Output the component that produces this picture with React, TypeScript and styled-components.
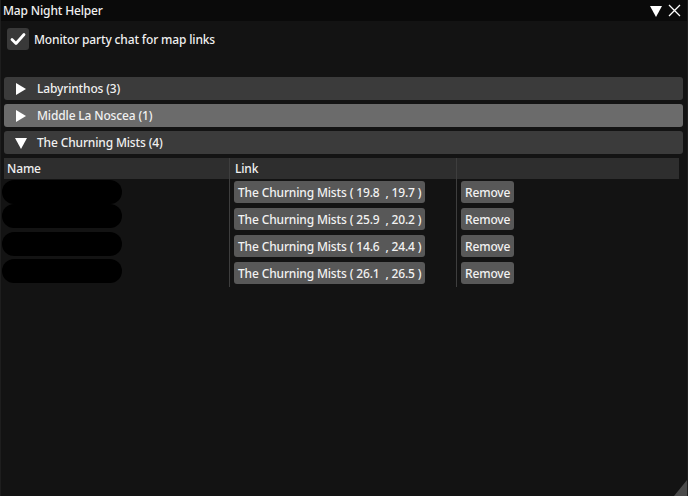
import React from "react";
import styled, { createGlobalStyle } from "styled-components";

const GlobalStyle = createGlobalStyle`
  html, body { margin: 0; padding: 0; background: #131313; }
  * { box-sizing: border-box; }
`;

const Window = styled.div`
  width: 688px;
  height: 496px;
  background: #131313;
  border-left: 1px solid #1e1e1e;
  border-right: 1px solid #1e1e1e;
  display: flex;
  flex-direction: column;
  position: relative;
  font-family: "Noto Sans", "Open Sans", sans-serif;
  font-weight: 500;
  font-size: 12px;
  letter-spacing: -0.15px;
  color: #f0f0f0;
  overflow: hidden;
`;

const TitleBar = styled.div`
  height: 21px;
  background: #0a0a0a;
  display: flex;
  align-items: center;
  padding: 0 6px 0 2px;
  gap: 6px;
`;

const Title = styled.span`
  flex: 1;
  line-height: 21px;
`;

const Body = styled.div`
  display: flex;
  flex-direction: column;
  padding: 7px 4px 0 3px;
`;

const CheckRow = styled.label`
  display: flex;
  align-items: center;
  gap: 5px;
  height: 22px;
  padding-left: 3px;
  margin-bottom: 27px;
`;

const CheckBox = styled.span`
  width: 22px;
  height: 22px;
  border-radius: 3px;
  background: #393939;
  display: flex;
  align-items: center;
  justify-content: center;
`;

const Headers = styled.div`
  display: flex;
  flex-direction: column;
  gap: 4px;
`;

const Header = styled.div<{ $hover?: boolean }>`
  height: 23px;
  border-radius: 3px;
  background: ${(p) => (p.$hover ? "#6b6b6b" : "#3b3b3b")};
  display: flex;
  align-items: center;
  padding-left: 11px;
  gap: 10px;
`;

const Table = styled.div`
  margin-top: 4px;
  width: 675px;
  display: grid;
  grid-template-columns: 225px 227px 1fr;
  grid-auto-rows: 27px;
  grid-template-rows: 21px;
`;

const HeadCell = styled.div<{ $first?: boolean }>`
  background: #2e2e2e;
  line-height: 21px;
  padding-left: ${(p) => (p.$first ? "3px" : "5px")};
  border-left: ${(p) => (p.$first ? "none" : "1px solid #3e3e3e")};
`;

const Cell = styled.div<{ $first?: boolean }>`
  padding-top: 2px;
  padding-left: ${(p) => (p.$first ? "0" : "4px")};
  border-left: ${(p) => (p.$first ? "none" : "1px solid #3e3e3e")};
`;

const Blob = styled.span<{ $top: number }>`
  display: block;
  width: 120px;
  height: 24px;
  margin-left: -2px;
  margin-top: ${(p) => p.$top}px;
  background: #000;
  border-radius: 12px;
`;

const Button = styled.button`
  height: 22px;
  border: none;
  border-radius: 3px;
  background: #585858;
  color: #f2f2f2;
  font-family: inherit;
  font-weight: 500;
  font-size: 12px;
  letter-spacing: -0.15px;
  padding: 0 4px;
  white-space: pre;
  cursor: pointer;
`;

const Grip = styled.div`
  position: absolute;
  right: 0;
  bottom: 0;
  width: 13px;
  height: 16px;
  background: #4a4a4a;
  clip-path: polygon(100% 0, 100% 100%, 0 100%);
`;

const RightArrow = () => (
  <svg width="12" height="12" viewBox="0 0 12 12">
    <polygon points="1,0 11,6 1,12" fill="#fff" />
  </svg>
);
const DownArrow = () => (
  <svg width="12" height="12" viewBox="0 0 12 12">
    <polygon points="0,1 12,1 6,12" fill="#fff" />
  </svg>
);

const rows = [
  { link: "The Churning Mists ( 19.8  , 19.7 )", top: 1 },
  { link: "The Churning Mists ( 25.9  , 20.2 )", top: -2 },
  { link: "The Churning Mists ( 14.6  , 24.4 )", top: -1 },
  { link: "The Churning Mists ( 26.1  , 26.5 )", top: -1 },
];

export default function App() {
  return (
    <>
      <GlobalStyle />
      <Window>
        <TitleBar>
          <Title>Map Night Helper</Title>
          <svg width="12" height="12" viewBox="0 0 12 12">
            <polygon points="0,1 12,1 6,12" fill="#fff" />
          </svg>
          <svg width="13" height="13" viewBox="0 0 13 13">
            <path d="M1 1 L12 12 M12 1 L1 12" stroke="#fff" strokeWidth="1.3" />
          </svg>
        </TitleBar>
        <Body>
          <CheckRow>
            <CheckBox>
              <svg width="16" height="14" viewBox="0 0 16 14">
                <path d="M2 7.5 L6 11.5 L14 2.5" stroke="#fff" strokeWidth="2.8" fill="none" strokeLinecap="round" strokeLinejoin="round" />
              </svg>
            </CheckBox>
            Monitor party chat for map links
          </CheckRow>
          <Headers>
            <Header>
              <RightArrow />
              <span>Labyrinthos (3)</span>
            </Header>
            <Header $hover>
              <RightArrow />
              <span>Middle La Noscea (1)</span>
            </Header>
            <Header>
              <DownArrow />
              <span>The Churning Mists (4)</span>
            </Header>
          </Headers>
          <Table>
            <HeadCell $first>Name</HeadCell>
            <HeadCell>Link</HeadCell>
            <HeadCell></HeadCell>
            {rows.map((r, i) => (
              <React.Fragment key={i}>
                <Cell $first>
                  <Blob $top={r.top - 2} />
                </Cell>
                <Cell>
                  <Button>{r.link}</Button>
                </Cell>
                <Cell>
                  <Button>Remove</Button>
                </Cell>
              </React.Fragment>
            ))}
          </Table>
        </Body>
        <Grip />
      </Window>
    </>
  );
}
